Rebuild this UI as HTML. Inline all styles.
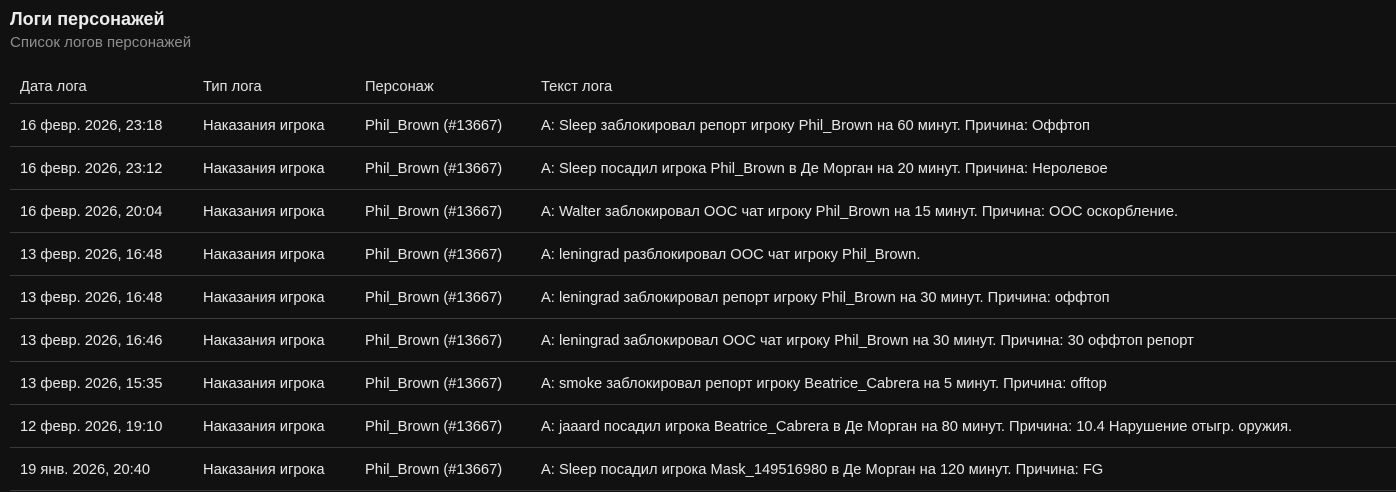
<!DOCTYPE html>
<html><head><meta charset="utf-8"><style>
html,body{margin:0;background:#111111;width:1396px;height:492px;overflow:hidden;font-family:"Liberation Sans",Arial,sans-serif;color:#e6e6e6}
h1{position:absolute;left:10px;top:9px;margin:0;font-size:18px;font-weight:bold;color:#ececec}
.sub{position:absolute;left:10px;top:34px;font-size:15px;color:#8e8e8e}
table{position:absolute;left:10px;top:64px;width:1386px;border-collapse:collapse;font-size:14.7px}
th{font-weight:normal;text-align:left;height:39px;padding:7px 0 0 10px;border-bottom:1px solid #3a3a3a;color:#e0e0e0;box-sizing:border-box}
td{height:42px;padding:2px 0 0 10px;border-bottom:1px solid #3a3a3a;white-space:nowrap;box-sizing:border-box}
tr:not(:first-child){height:43px}
</style></head><body>
<h1>Логи персонажей</h1>
<div class="sub">Список логов персонажей</div>
<table>
<colgroup><col style="width:183px"><col style="width:162px"><col style="width:176px"><col></colgroup>
<tr><th>Дата лога</th><th>Тип лога</th><th>Персонаж</th><th>Текст лога</th></tr>
<tr><td>16 февр. 2026, 23:18</td><td>Наказания игрока</td><td>Phil_Brown (#13667)</td><td>A: Sleep заблокировал репорт игроку Phil_Brown на 60 минут. Причина: Оффтоп</td></tr>
<tr><td>16 февр. 2026, 23:12</td><td>Наказания игрока</td><td>Phil_Brown (#13667)</td><td>A: Sleep посадил игрока Phil_Brown в Де Морган на 20 минут. Причина: Неролевое</td></tr>
<tr><td>16 февр. 2026, 20:04</td><td>Наказания игрока</td><td>Phil_Brown (#13667)</td><td>A: Walter заблокировал ООС чат игроку Phil_Brown на 15 минут. Причина: ООС оскорбление.</td></tr>
<tr><td>13 февр. 2026, 16:48</td><td>Наказания игрока</td><td>Phil_Brown (#13667)</td><td>A: leningrad разблокировал ООС чат игроку Phil_Brown.</td></tr>
<tr><td>13 февр. 2026, 16:48</td><td>Наказания игрока</td><td>Phil_Brown (#13667)</td><td>A: leningrad заблокировал репорт игроку Phil_Brown на 30 минут. Причина: оффтоп</td></tr>
<tr><td>13 февр. 2026, 16:46</td><td>Наказания игрока</td><td>Phil_Brown (#13667)</td><td>A: leningrad заблокировал ООС чат игроку Phil_Brown на 30 минут. Причина: 30 оффтоп репорт</td></tr>
<tr><td>13 февр. 2026, 15:35</td><td>Наказания игрока</td><td>Phil_Brown (#13667)</td><td>A: smoke заблокировал репорт игроку Beatrice_Cabrera на 5 минут. Причина: offtop</td></tr>
<tr><td>12 февр. 2026, 19:10</td><td>Наказания игрока</td><td>Phil_Brown (#13667)</td><td>A: jaaard посадил игрока Beatrice_Cabrera в Де Морган на 80 минут. Причина: 10.4 Нарушение отыгр. оружия.</td></tr>
<tr><td>19 янв. 2026, 20:40</td><td>Наказания игрока</td><td>Phil_Brown (#13667)</td><td>A: Sleep посадил игрока Mask_149516980 в Де Морган на 120 минут. Причина: FG</td></tr>
</table>
</body></html>
